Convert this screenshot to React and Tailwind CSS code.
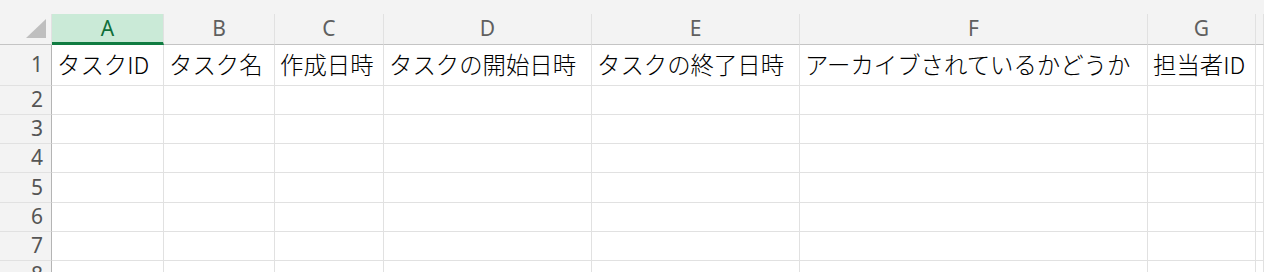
const columns = ['A', 'B', 'C', 'D', 'E', 'F', 'G', ''];

const headerRow = [
  'タスクID',
  'タスク名',
  '作成日時',
  'タスクの開始日時',
  'タスクの終了日時',
  'アーカイブされているかどうか',
  '担当者ID',
  '',
];

const rowHeights = ['h-[41px]', 'h-[29px]', 'h-[29px]', 'h-[29px]', 'h-[30px]', 'h-[29px]', 'h-[29px]', 'h-[29px]'];

const latin = { fontFamily: '"Noto Sans", "Liberation Sans", sans-serif' };
const cellFont = { fontFamily: '"Noto Sans CJK JP", "Noto Sans", sans-serif' };

function CornerCell() {
  return (
    <div className="h-full border-r border-b border-r-[#e1e1e1] border-b-[#c4c4c4] bg-[#f3f3f3] flex items-end justify-end pr-[5px] pb-[6px]">
      <svg width="20" height="19" viewBox="0 0 20 19">
        <polygon points="20,0 20,19 0,19" fill="#bfbfbf" />
      </svg>
    </div>
  );
}

function ColumnHeader({ label }) {
  const selected = label === 'A';
  return (
    <div
      style={latin}
      className={
        selected
          ? 'h-full flex items-center justify-center bg-[#caead7] text-[#0f6e39] text-[21px] border-r border-r-[#e1e1e1] border-b-[3px] border-b-[#107c41] pt-[2px]'
          : 'h-full flex items-center justify-center bg-[#f3f3f3] text-[#5f5f5f] text-[21px] border-r border-r-[#e1e1e1] border-b border-b-[#c4c4c4]'
      }
    >
      {label}
    </div>
  );
}

export default function App() {
  return (
    <div className="w-[1264px] h-[272px] overflow-hidden bg-white">
      <div className="h-[14px] bg-[#f3f3f3]" />
      <div className="grid grid-cols-[52px_112px_111px_109px_208px_208px_348px_108px_1fr]">
        <div className="h-[31px]">
          <CornerCell />
        </div>
        {columns.map((c, i) => (
          <div key={'h' + i} className="h-[31px]">
            <ColumnHeader label={c} />
          </div>
        ))}

        {rowHeights.map((h, r) => (
          <Row key={r} index={r} height={h} />
        ))}
      </div>
    </div>
  );
}

function Row({ index, height }) {
  return (
    <>
      <div
        style={latin}
        className={height + ' flex items-center justify-end pr-[8px] bg-[#f3f3f3] text-[#555555] text-[21px] border-r border-r-[#b4b4b4] border-b border-b-[#e1e1e1]'}
      >
        {index + 1}
      </div>
      {columns.map((c, i) => (
        <div
          key={i}
          style={cellFont}
          className={height + ' flex items-center pl-[5px] whitespace-nowrap overflow-hidden text-[23.4px] font-light leading-none text-black border-r border-b border-[#e1e1e1]'}
        >
          {index === 0 ? headerRow[i] : ''}
        </div>
      ))}
    </>
  );
}
